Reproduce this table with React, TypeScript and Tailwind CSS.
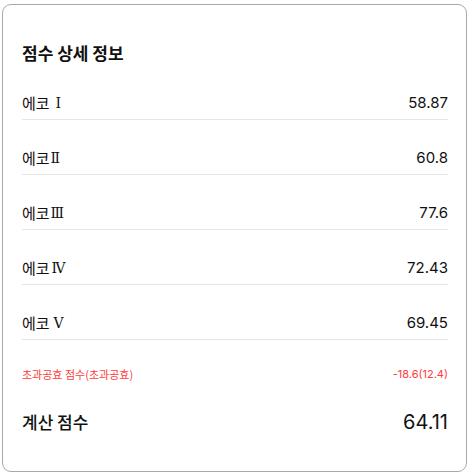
import React from "react";

const rows = [
  { label: "에코", num: "Ⅰ", gap: "ml-[6px] mr-[4px]", value: "58.87" },
  { label: "에코", num: "Ⅱ", gap: "ml-[1px]", value: "60.8" },
  { label: "에코", num: "Ⅲ", gap: "ml-[1px]", value: "77.6" },
  { label: "에코", num: "Ⅳ", gap: "ml-[2px]", value: "72.43" },
  { label: "에코", num: "Ⅴ", gap: "ml-[4px]", value: "69.45" },
];

const kr = "font-['Noto_Sans_CJK_KR',sans-serif]";
const numFont = "font-['Inter','Noto_Sans_CJK_KR',sans-serif]";

export default function App() {
  return (
    <div className="w-[471px] h-[474px] bg-white pt-[4px] pl-[2px]">
      <div className="w-[465px] h-[468px] border border-[#a9a9a9] rounded-[9px] bg-white pt-[34px] pl-[19px] pr-[18px] text-[#111]">
        <h2 className={`${kr} text-[17px] leading-[28px] font-bold`}>점수 상세 정보</h2>

        {rows.map((r, i) => (
          <div
            key={i}
            className={`flex items-center justify-between border-b border-[#e6e6e6] pb-[4px] ${i === 0 ? "pt-[24px]" : "pt-[26px]"}`}
          >
            <span className={`${kr} text-[15px] leading-[24px] flex items-center`}>
              {r.label}
              <span className={`font-['DejaVu_Serif',serif] text-[14px] ${r.gap}`}>{r.num}</span>
            </span>
            <span className={`${numFont} text-[15px] leading-[24px]`}>{r.value}</span>
          </div>
        ))}

        <div className="flex items-center justify-between pt-[26px] text-[#ff3b3b]">
          <span className={`${kr} text-[11px] leading-[16px]`}>초과공효 점수(초과공효)</span>
          <span className={`${numFont} text-[11px] leading-[16px]`}>-18.6(12.4)</span>
        </div>

        <div className="flex items-center justify-between pt-[26px]">
          <span className={`${kr} text-[17px] leading-[28px] font-medium`}>계산 점수</span>
          <span className={`${numFont} text-[20px] leading-[28px]`}>64.11</span>
        </div>
      </div>
    </div>
  );
}
